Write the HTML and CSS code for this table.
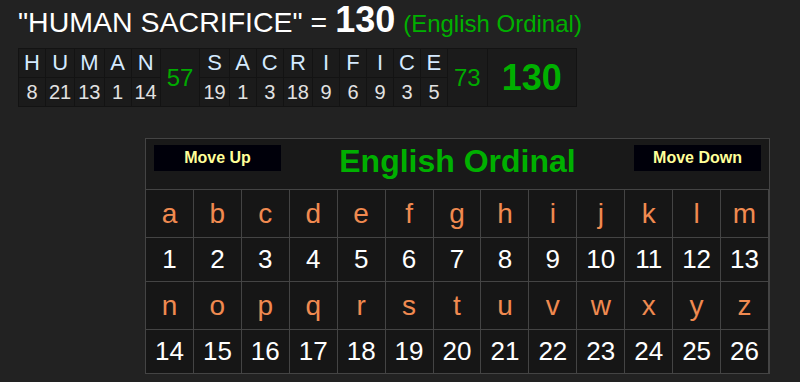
FILE: index.html
```html
<!DOCTYPE html>
<html>
<head>
<meta charset="utf-8">
<link rel="stylesheet" href="styles.css">
</head>
<body>
<div class="page">
  <h1 class="result">"HUMAN SACRIFICE" = <b class="sum">130</b> <span class="cipher-name">(English Ordinal)</span></h1>
  <table class="breakdown">
    <tr class="chars">
      <td>H</td><td>U</td><td>M</td><td>A</td><td>N</td>
      <td class="sub" rowspan="2">57</td>
      <td>S</td><td>A</td><td>C</td><td>R</td><td>I</td><td>F</td><td>I</td><td>C</td><td>E</td>
      <td class="sub" rowspan="2">73</td>
      <td class="total" rowspan="2">130</td>
    </tr>
    <tr class="vals">
      <td>8</td><td>21</td><td>13</td><td>1</td><td>14</td>
      <td>19</td><td>1</td><td>3</td><td>18</td><td>9</td><td>6</td><td>9</td><td>3</td><td>5</td>
    </tr>
  </table>

  <div class="cipher">
    <div class="cipher-head">
      <button class="move">Move Up</button>
      <div class="cipher-title">English Ordinal</div>
      <button class="move">Move Down</button>
    </div>
    <table class="chart">
      <tr class="let"><td>a</td><td>b</td><td>c</td><td>d</td><td>e</td><td>f</td><td>g</td><td>h</td><td>i</td><td>j</td><td>k</td><td>l</td><td>m</td></tr>
      <tr class="num"><td>1</td><td>2</td><td>3</td><td>4</td><td>5</td><td>6</td><td>7</td><td>8</td><td>9</td><td>10</td><td>11</td><td>12</td><td>13</td></tr>
      <tr class="let"><td>n</td><td>o</td><td>p</td><td>q</td><td>r</td><td>s</td><td>t</td><td>u</td><td>v</td><td>w</td><td>x</td><td>y</td><td>z</td></tr>
      <tr class="num"><td>14</td><td>15</td><td>16</td><td>17</td><td>18</td><td>19</td><td>20</td><td>21</td><td>22</td><td>23</td><td>24</td><td>25</td><td>26</td></tr>
    </table>
  </div>
</div>
</body>
</html>
```

FILE: styles.css
```css
html, body {
  margin: 0;
  padding: 0;
  background: #222222;
  font-family: "Liberation Sans", Arial, sans-serif;
  overflow: hidden;
}

.page {
  padding: 2px 0 0 18px;
}

.result {
  margin: 0;
  height: 34px;
  font-size: 28.5px;
  font-weight: normal;
  line-height: 32px;
  color: #ffffff;
  white-space: nowrap;
}

.sum {
  font-size: 36px;
  font-weight: bold;
  line-height: 1;
}

.cipher-name {
  font-size: 24px;
  color: #00b000;
}

.breakdown {
  margin-top: 12px;
  border-collapse: collapse;
  background: #1b1b1b;
}

.breakdown td {
  border: 1px solid #131313;
  padding: 0 3px;
  min-width: 20px;
  height: 28px;
  text-align: center;
  line-height: 28px;
}

.breakdown .chars td {
  font-size: 22px;
  color: #d4eaff;
}

.breakdown .vals td {
  font-size: 20px;
  color: #e2e2e2;
}

.breakdown td.sub {
  font-size: 24px;
  color: #00aa00;
  padding: 0 6px;
}

.breakdown td.total {
  font-size: 36px;
  font-weight: bold;
  color: #00b000;
  padding: 0 14px;
}

.cipher {
  margin: 31px 0 0 127px;
  width: 623px;
  border: 1px solid #444444;
  background: #161616;
}

.cipher-head {
  display: flex;
  justify-content: space-between;
  align-items: flex-start;
  height: 50px;
  padding: 0 8px;
  border-bottom: 1px solid #444444;
  background: #191919;
}

.move {
  margin-top: 6px;
  width: 127px;
  height: 26px;
  border: none;
  background: #00000a;
  color: #ffff99;
  font-family: "Liberation Sans", Arial, sans-serif;
  font-size: 16px;
  font-weight: bold;
  padding: 0;
}

.cipher-title {
  margin-top: 4px;
  font-size: 32px;
  font-weight: bold;
  color: #00b000;
}

.chart {
  border-collapse: collapse;
  width: 624px;
  table-layout: fixed;
  margin: 0 -1px -1px -1px;
}

.chart td {
  border: 1px solid #444444;
  text-align: center;
  padding: 0;
}

.chart tr:first-child td {
  border-top: none;
}

.chart .let td {
  height: 47px;
  font-size: 28px;
  color: #f08a50;
}

.chart .num td {
  height: 43px;
  font-size: 26px;
  color: #ffffff;
}
```
